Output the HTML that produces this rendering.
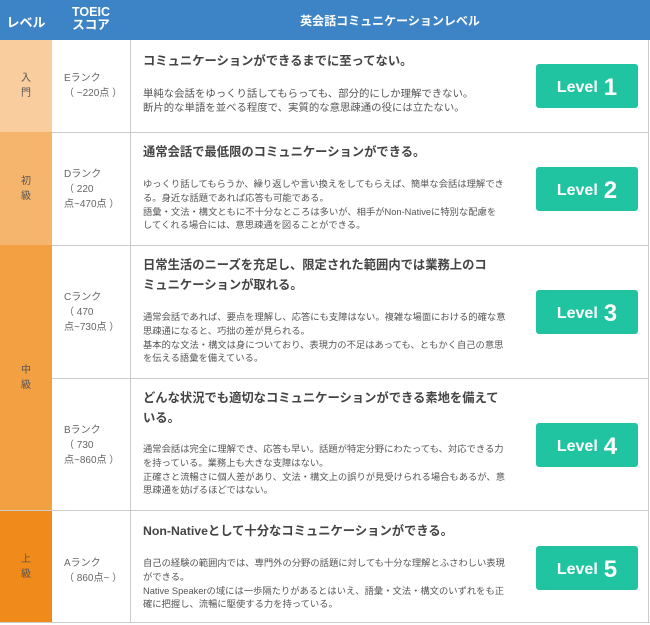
<!DOCTYPE html>
<html><head><meta charset="utf-8"><style>
*{margin:0;padding:0;box-sizing:border-box}
body{width:650px;height:625px;background:#fff;font-family:"Liberation Sans","Noto Sans CJK JP",sans-serif;position:relative;overflow:hidden;color:#444}
.a{position:absolute}
.hd{background:#3d84c6;color:#fff;font-weight:bold;font-size:13px;text-align:center}
.lv{text-align:center;font-size:10px;color:#555;line-height:15px;display:flex;align-items:center;justify-content:center}
.sc{font-size:10px;color:#666;line-height:15px}
.t{font-size:12.3px;font-weight:bold;color:#444;line-height:20px;white-space:nowrap}
.b{font-size:9.3px;color:#555;line-height:13.8px;white-space:nowrap}
.btn{background:#20c4a0;color:#fff;font-weight:bold;width:102px;height:44px;border-radius:3px;display:flex;align-items:center;justify-content:center;font-size:16px;padding-top:3px}
.btn span{font-size:24px;margin-left:6px}
.hl{height:1px;background:#ccc}
.vl{width:1px;background:#ccc}
</style></head><body>
<div class="a hd" style="left:0;top:0;width:650px;height:40px"></div>
<div class="a hd" style="left:0;top:12px;width:52px">レベル</div>
<div class="a hd" style="left:52px;top:6px;width:78px;line-height:13px;font-size:12.5px">TOEIC<br>スコア</div>
<div class="a hd" style="left:130px;top:12px;width:520px;font-size:12px">英会話コミュニケーションレベル</div>

<div class="a lv" style="left:0;top:40px;width:52px;height:92px;background:#f9cd9d">入<br>門</div>
<div class="a lv" style="left:0;top:132px;width:52px;height:113px;background:#f6b56c">初<br>級</div>
<div class="a lv" style="left:0;top:245px;width:52px;height:265px;background:#f3a043">中<br>級</div>
<div class="a lv" style="left:0;top:510px;width:52px;height:113px;background:#ef8a1b">上<br>級</div>

<div class="a vl" style="left:130px;top:40px;height:583px"></div>
<div class="a vl" style="left:648px;top:40px;height:583px"></div>
<div class="a hl" style="left:0;top:622px;width:650px"></div>
<div class="a hl" style="left:52px;top:132px;width:597px"></div>
<div class="a hl" style="left:52px;top:245px;width:597px"></div>
<div class="a hl" style="left:52px;top:378px;width:597px"></div>
<div class="a hl" style="left:0;top:510px;width:649px"></div>

<div class="a sc" style="left:64px;top:71px">Eランク<br>（ ~220点 ）</div>
<div class="a sc" style="left:64px;top:167px">Dランク<br>（ 220<br>点~470点 ）</div>
<div class="a sc" style="left:64px;top:290px">Cランク<br>（ 470<br>点~730点 ）</div>
<div class="a sc" style="left:64px;top:423px">Bランク<br>（ 730<br>点~860点 ）</div>
<div class="a sc" style="left:64px;top:556px">Aランク<br>（ 860点~ ）</div>

<div class="a t" style="left:143px;top:51px">コミュニケーションができるまでに至ってない。</div>
<div class="a b" style="left:143px;top:88px;font-size:10.4px;line-height:14px">単純な会話をゆっくり話してもらっても、部分的にしか理解できない。<br>断片的な単語を並べる程度で、実質的な意思疎通の役には立たない。</div>

<div class="a t" style="left:143px;top:142px">通常会話で最低限のコミュニケーションができる。</div>
<div class="a b" style="left:143px;top:178px">ゆっくり話してもらうか、繰り返しや言い換えをしてもらえば、簡単な会話は理解でき<br>る。身近な話題であれば応答も可能である。<br>語彙・文法・構文ともに不十分なところは多いが、相手がNon-Nativeに特別な配慮を<br>してくれる場合には、意思疎通を図ることができる。</div>

<div class="a t" style="left:143px;top:255px">日常生活のニーズを充足し、限定された範囲内では業務上のコ<br>ミュニケーションが取れる。</div>
<div class="a b" style="left:143px;top:311px">通常会話であれば、要点を理解し、応答にも支障はない。複雑な場面における的確な意<br>思疎通になると、巧拙の差が見られる。<br>基本的な文法・構文は身についており、表現力の不足はあっても、ともかく自己の意思<br>を伝える語彙を備えている。</div>

<div class="a t" style="left:143px;top:388px">どんな状況でも適切なコミュニケーションができる素地を備えて<br>いる。</div>
<div class="a b" style="left:143px;top:443px">通常会話は完全に理解でき、応答も早い。話題が特定分野にわたっても、対応できる力<br>を持っている。業務上も大きな支障はない。<br>正確さと流暢さに個人差があり、文法・構文上の誤りが見受けられる場合もあるが、意<br>思疎通を妨げるほどではない。</div>

<div class="a t" style="left:143px;top:521px">Non-Nativeとして十分なコミュニケーションができる。</div>
<div class="a b" style="left:143px;top:557px">自己の経験の範囲内では、専門外の分野の話題に対しても十分な理解とふさわしい表現<br>ができる。<br>Native Speakerの域には一歩隔たりがあるとはいえ、語彙・文法・構文のいずれをも正<br>確に把握し、流暢に駆使する力を持っている。</div>

<div class="a btn" style="left:536px;top:64px">Level<span>1</span></div>
<div class="a btn" style="left:536px;top:167px">Level<span>2</span></div>
<div class="a btn" style="left:536px;top:290px">Level<span>3</span></div>
<div class="a btn" style="left:536px;top:423px">Level<span>4</span></div>
<div class="a btn" style="left:536px;top:546px">Level<span>5</span></div>
</body></html>
